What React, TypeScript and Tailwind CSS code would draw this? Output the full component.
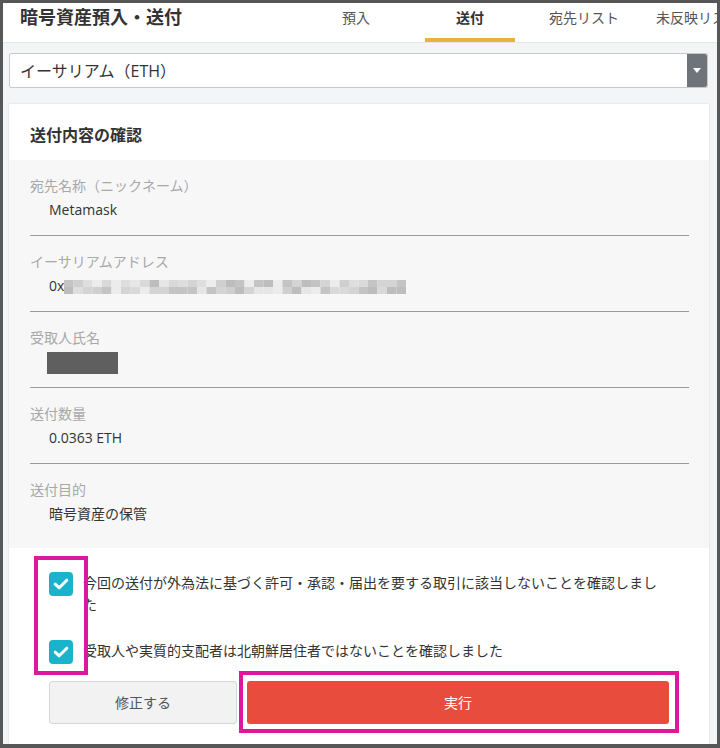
import React from "react";

const FONT = "'Open Sans', 'Noto Sans CJK JP', sans-serif";

const mosaicCols = 36;
function shade(i: number) {
  const v = Math.abs(Math.sin(i * 12.9898) * 43758.5453) % 1;
  const palette = ["#e6e6e6", "#d9d9d9", "#cfcfcf", "#dedede", "#c4c4c4", "#ececec", "#bdbdbd", "#d4d4d4"];
  return palette[Math.floor(v * palette.length)];
}

function Mosaic() {
  const cells: React.ReactNode[] = [];
  for (let r = 0; r < 2; r++) {
    for (let c = 0; c < mosaicCols; c++) {
      cells.push(
        <rect key={`${r}-${c}`} x={c * 9.5} y={r * 7} width={9.5} height={7} fill={shade(r * 100 + c + 3)} />
      );
    }
  }
  return (
    <svg width="342" height="14" viewBox="0 0 342 14" className="block">
      {cells}
    </svg>
  );
}

function Check() {
  return (
    <div className="w-[24px] h-[24px] rounded-[4px] bg-[#1ab3cc] flex items-center justify-center shrink-0">
      <svg width="18" height="18" viewBox="0 0 18 18">
        <path d="M3.2 9.2 L7.2 12.8 L14.8 5.2" fill="none" stroke="#fff" strokeWidth="3" strokeLinecap="round" strokeLinejoin="round" />
      </svg>
    </div>
  );
}

function Item({ label, children, last }: { label: string; children: React.ReactNode; last?: boolean }) {
  return (
    <div className={last ? "pt-[16px] pb-[24px]" : "pt-[16px] pb-[15px] border-b border-[#9a9a9a]"}>
      <div className="text-[14px] leading-[20px] text-[#a8a8a8]">{label}</div>
      <div className="mt-[4px] pl-[19px] text-[14px] leading-[20px] text-[#333]">{children}</div>
    </div>
  );
}

export default function App() {
  return (
    <div className="relative w-[720px] h-[748px] bg-[#575757] pt-[3px] pl-[3px] pr-[3px] pb-[4px]" style={{ fontFamily: FONT }}>
      <div className="h-full w-full bg-[#f4f5f7] overflow-hidden flex flex-col">
        {/* Header */}
        <div className="h-[40px] bg-white border-b border-[#e4e6e8] flex shrink-0 overflow-hidden">
          <div className="pl-[17px] h-[28px] flex items-center text-[18px] font-bold text-[#333] whitespace-nowrap">
            暗号資産預入・送付
          </div>
          <div className="ml-[129px] flex gap-[24px]">
            {[
              { t: "預入", a: false },
              { t: "送付", a: true },
              { t: "宛先リスト", a: false },
              { t: "未反映リスト", a: false },
            ].map((x) => (
              <div key={x.t} className="w-[90px] shrink-0 flex flex-col h-[39px]">
                <div className={`h-[28px] flex items-center justify-center text-[14px] whitespace-nowrap ${x.a ? "font-bold text-[#333]" : "text-[#555]"}`}>
                  {x.t}
                </div>
                <div className="flex-1" />
                <div className={`h-[4px] ${x.a ? "bg-[#e9b23a]" : ""}`} />
              </div>
            ))}
          </div>
        </div>

        {/* Select */}
        <div className="mt-[10px] ml-[6px] mr-[9px] h-[35px] bg-white border border-[#c9c9c9] rounded-[2px] flex items-stretch shrink-0">
          <div className="flex-1 flex items-center pl-[10px] text-[16px] text-[#333]">イーサリアム（ETH）</div>
          <div className="w-[20px] bg-[#6f747b] flex items-center justify-center rounded-r-[2px]">
            <svg width="8" height="6" viewBox="0 0 8 6">
              <path d="M0 0 L8 0 L4 5 Z" fill="#fff" />
            </svg>
          </div>
        </div>

        {/* Card */}
        <div className="mt-[16px] ml-[6px] w-[700px] flex-1 bg-white shadow-[0_0_2px_rgba(0,0,0,0.12)] flex flex-col">
          <div className="h-[56px] pl-[21px] pt-[6px] flex items-center text-[16px] font-bold text-[#333]">送付内容の確認</div>
          <div className="bg-[#f7f7f7] pl-[21px] pr-[20px]">
            <Item label="宛先名称（ニックネーム）">Metamask</Item>
            <Item label="イーサリアムアドレス">
              <div className="flex items-center h-[20px]">
                <span>0x</span>
                <div className="mt-[2px]">
                  <Mosaic />
                </div>
              </div>
            </Item>
            <Item label="受取人氏名">
              <div className="h-[20px] -ml-[2px]">
                <div className="mt-[2px] w-[71px] h-[22px] bg-[#5f5f5f]" />
              </div>
            </Item>
            <Item label="送付数量">0.0363 ETH</Item>
            <Item label="送付目的" last>暗号資産の保管</Item>
          </div>

          <div className="pl-[40px] pt-[24px]">
            <div className="flex gap-[10px]">
              <Check />
              <div className="w-[580px] text-[14px] leading-[22px] text-[#333]">
                今回の送付が外為法に基づく許可・承認・届出を要する取引に該当しないことを確認しました
              </div>
            </div>
            <div className="flex gap-[10px] mt-[24px]">
              <Check />
              <div className="text-[14px] leading-[22px] text-[#333]">
                受取人や実質的支配者は北朝鮮居住者ではないことを確認しました
              </div>
            </div>
            <div className="flex gap-[10px] mt-[17px]">
              <div className="w-[188px] h-[43px] bg-[#f2f2f2] border border-[#d8d8d8] rounded-[3px] flex items-center justify-center text-[14px] text-[#555]">
                修正する
              </div>
              <div className="w-[422px] h-[43px] bg-[#e84c3d] rounded-[3px] flex items-center justify-center text-[14px] text-white">
                実行
              </div>
            </div>
          </div>
        </div>
      </div>

      {/* Highlight overlays */}
      <div className="absolute left-[34px] top-[556px] w-[54px] h-[119px] border-[4px] border-[#e0169c]" />
      <div className="absolute left-[239px] top-[671px] w-[440px] h-[62px] border-[4px] border-[#e0169c]" />
    </div>
  );
}
